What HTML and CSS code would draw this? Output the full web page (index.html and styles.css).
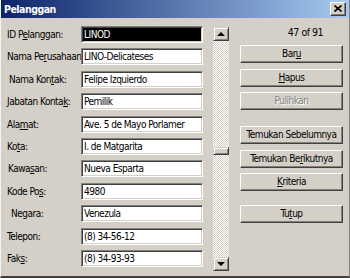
FILE: index.html
```html
<!DOCTYPE html>
<html>
<head>
    <title>Pelanggan</title>
    <link rel="stylesheet" href="styles.css">
</head>
<body>
    <div class="window">
        <div class="titlebar">
            <span class="title">Pelanggan</span>
            <div class="close">
                <svg width="8" height="7" viewBox="0 0 8 7">
                    <path d="M0.5 0.5 L7.5 6.5 M7.5 0.5 L0.5 6.5" stroke="#000" stroke-width="1.7"/>
                </svg>
            </div>
        </div>

        <div class="content">
            <!-- kolom isian -->
            <div class="fields">
                <div class="row"><label class="label">ID P<u>e</u>langgan:</label><div class="input selected">LINOD</div></div>
                <div class="row"><label class="label">Nama Pe<u>r</u>usahaan:</label><div class="input">LINO-Delicateses</div></div>
                <div class="row"><label class="label in2">Nama Kon<u>t</u>ak:</label><div class="input">Felipe Izquierdo</div></div>
                <div class="row"><label class="label">Jabatan Konta<u>k</u>:</label><div class="input">Pemilik</div></div>
                <div class="row"><label class="label">Ala<u>m</u>at:</label><div class="input">Ave. 5 de Mayo Porlamer</div></div>
                <div class="row"><label class="label">Ko<u>t</u>a:</label><div class="input">I. de Matgarita</div></div>
                <div class="row"><label class="label in1">Kawa<u>s</u>an:</label><div class="input">Nueva Esparta</div></div>
                <div class="row"><label class="label">Kode Po<u>s</u>:</label><div class="input">4980</div></div>
                <div class="row"><label class="label in3">Negara:</label><div class="input">Venezula</div></div>
                <div class="row"><label class="label">Telepon:</label><div class="input">(8) 34-56-12</div></div>
                <div class="row"><label class="label">Fak<u>s</u>:</label><div class="input">(8) 34-93-93</div></div>
            </div>

            <!-- scrollbar rekaman -->
            <div class="scrollbar">
                <div class="arrow"><span class="tri up"></span></div>
                <div class="track">
                    <div class="thumb" style="margin-top: 106px"></div>
                </div>
                <div class="arrow"><span class="tri down"></span></div>
            </div>

            <!-- tombol aksi -->
            <div class="actions">
                <div class="counter">47 of 91</div>
                <div class="btn">Bar<u>u</u></div>
                <div class="btn"><u>H</u>apus</div>
                <div class="btn disabled">Pulihkan</div>
                <div class="btn group">Temukan Sebelumnya</div>
                <div class="btn">Temukan Be<u>r</u>ikutnya</div>
                <div class="btn"><u>K</u>riteria</div>
                <div class="btn group2">Tu<u>t</u>up</div>
            </div>
        </div>
    </div>
</body>
</html>
```
FILE: styles.css
```css
body {
    margin: 0;
    background: #D4D0C8;
    font-family: 'DejaVu Sans Condensed', 'DejaVu Sans', sans-serif;
    font-size: 10px;
    letter-spacing: -0.5px;
    color: #000;
}

.window {
    width: 350px;
    height: 278px;
    box-sizing: border-box;
    background: #D4D0C8;
    border-left: 1px solid #F4F3EF;
    border-right: 1px solid #808080;
    border-bottom: 2px solid #404040;
    overflow: hidden;
}

/* judul */
.titlebar {
    height: 18px;
    background: linear-gradient(90deg, #0A246A 0%, #A6CAF0 100%);
    display: flex;
    align-items: center;
    justify-content: space-between;
    padding: 0 3px 0 3px;
}
.title {
    color: #fff;
    font-weight: bold;
    font-size: 10.5px;
}
.close {
    width: 16px;
    height: 14px;
    box-sizing: border-box;
    background: #D4D0C8;
    border: 1px solid;
    border-color: #fff #404040 #404040 #fff;
    box-shadow: inset -1px -1px 0 #808080;
    display: flex;
    align-items: center;
    justify-content: center;
    padding: 0 1px 1px 0;
}

.content {
    display: flex;
    padding: 8px 0 0 6px;
}

/* isian */
.fields {
    display: flex;
    flex-direction: column;
    gap: 5.4px;
}
.row {
    display: flex;
    align-items: center;
    height: 17px;
}
.label {
    width: 74px;
    white-space: nowrap;
}
.label.in1 { padding-left: 1px; width: 73px; }
.label.in2 { padding-left: 2px; width: 72px; }
.label.in3 { padding-left: 4px; width: 70px; }

.input {
    width: 122px;
    height: 17px;
    box-sizing: border-box;
    background: #fff;
    border: 1px solid;
    border-color: #808080 #fff #fff #808080;
    box-shadow: inset 1px 1px 0 #404040, inset -1px -1px 0 #D4D0C8;
    padding: 0 0 0 2px;
    line-height: 15px;
    white-space: nowrap;
    overflow: hidden;
}
.input.selected {
    background: #000;
    color: #fff;
}

/* scrollbar */
.scrollbar {
    width: 16px;
    margin: 1px 0 0 10px;
    display: flex;
    flex-direction: column;
}
.arrow {
    height: 14px;
    box-sizing: border-box;
    background: #D4D0C8;
    border: 1px solid;
    border-color: #D4D0C8 #404040 #404040 #D4D0C8;
    box-shadow: inset 1px 1px 0 #fff, inset -1px -1px 0 #808080;
    display: flex;
    align-items: center;
    justify-content: center;
}
.tri {
    width: 0;
    height: 0;
    border-left: 4px solid transparent;
    border-right: 4px solid transparent;
}
.tri.up { border-bottom: 4px solid #000; }
.tri.down { border-top: 4px solid #000; }
.track {
    height: 216px;
    background: repeating-conic-gradient(#fff 0 25%, #D4D0C8 0 50%) 0 0 / 2px 2px;
}
.thumb {
    height: 8px;
    box-sizing: border-box;
    background: #D4D0C8;
    border: 1px solid;
    border-color: #D4D0C8 #404040 #404040 #D4D0C8;
    box-shadow: inset 1px 1px 0 #fff, inset -1px -1px 0 #808080;
}

/* tombol */
.actions {
    width: 103px;
    margin-left: 11px;
    display: flex;
    flex-direction: column;
    gap: 5.5px;
}
.counter {
    height: 13px;
    line-height: 13px;
    text-align: right;
    padding-right: 20px;
    margin-bottom: 0.5px;
    font-size: 10.5px;
}
.btn {
    height: 18px;
    box-sizing: border-box;
    border: 1px solid;
    border-color: #fff #404040 #404040 #fff;
    box-shadow: inset -1px -1px 0 #808080;
    text-align: center;
    line-height: 15px;
    white-space: nowrap;
}
.btn.disabled {
    color: #808080;
    text-shadow: 1px 1px 0 #fff;
}
.btn.group { margin-top: 10.5px; }
.btn.group2 { margin-top: 8.5px; }
```
